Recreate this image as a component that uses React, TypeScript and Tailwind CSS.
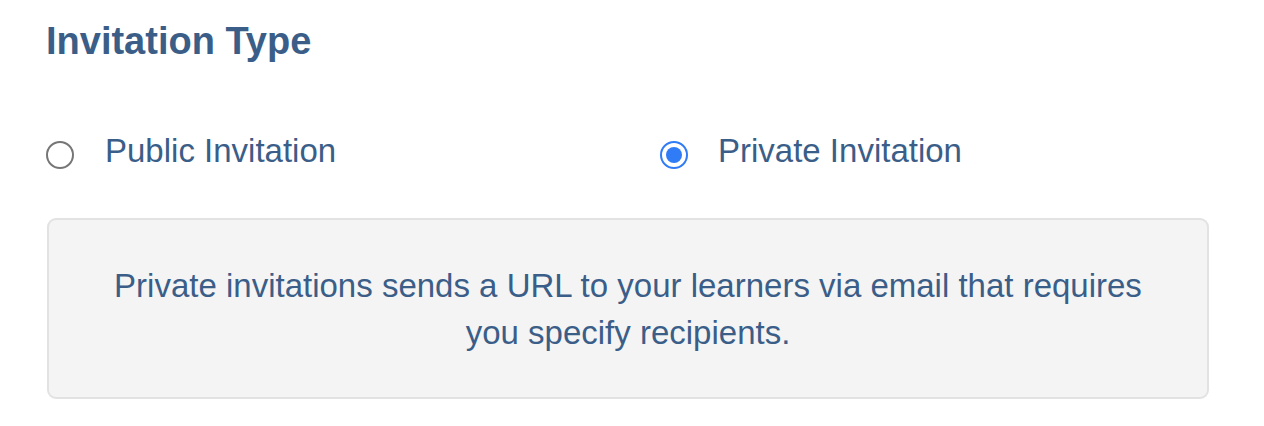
import React from "react";

export default function App() {
  return (
    <div
      className="w-[1264px] h-[426px] bg-white pl-[46px] pt-[18px]"
      style={{ fontFamily: '"Liberation Sans", Arial, sans-serif' }}
    >
      <h2 className="text-[38px] leading-[46px] font-bold text-[#3b5e88]">Invitation Type</h2>

      <div className="mt-[64px] flex">
        <label className="w-[614px] flex items-start">
          <span className="mt-[13px] w-[28px] h-[28px] rounded-full border-[2.5px] border-[#767676] bg-white shrink-0" />
          <span className="ml-[31px] text-[33px] leading-[46px] text-[#3b5e88]">Public Invitation</span>
        </label>
        <label className="flex items-start">
          <span className="mt-[13px] w-[28px] h-[28px] rounded-full border-[2.5px] border-[#2f7cf6] bg-white shrink-0 flex items-center justify-center">
            <span className="w-[16px] h-[16px] rounded-full bg-[#2f7cf6]" />
          </span>
          <span className="ml-[30px] text-[33px] leading-[46px] text-[#3b5e88]">Private Invitation</span>
        </label>
      </div>

      <div className="mt-[44px] ml-[1px] w-[1162px] rounded-[9px] border-2 border-[#e2e2e2] bg-[#f4f4f4] px-[48px] pt-[42px] pb-[41px]">
        <p className="text-center text-[33px] leading-[47px] text-[#3b5e88]">
          Private invitations sends a URL to your learners via email that requires you specify recipients.
        </p>
      </div>
    </div>
  );
}
